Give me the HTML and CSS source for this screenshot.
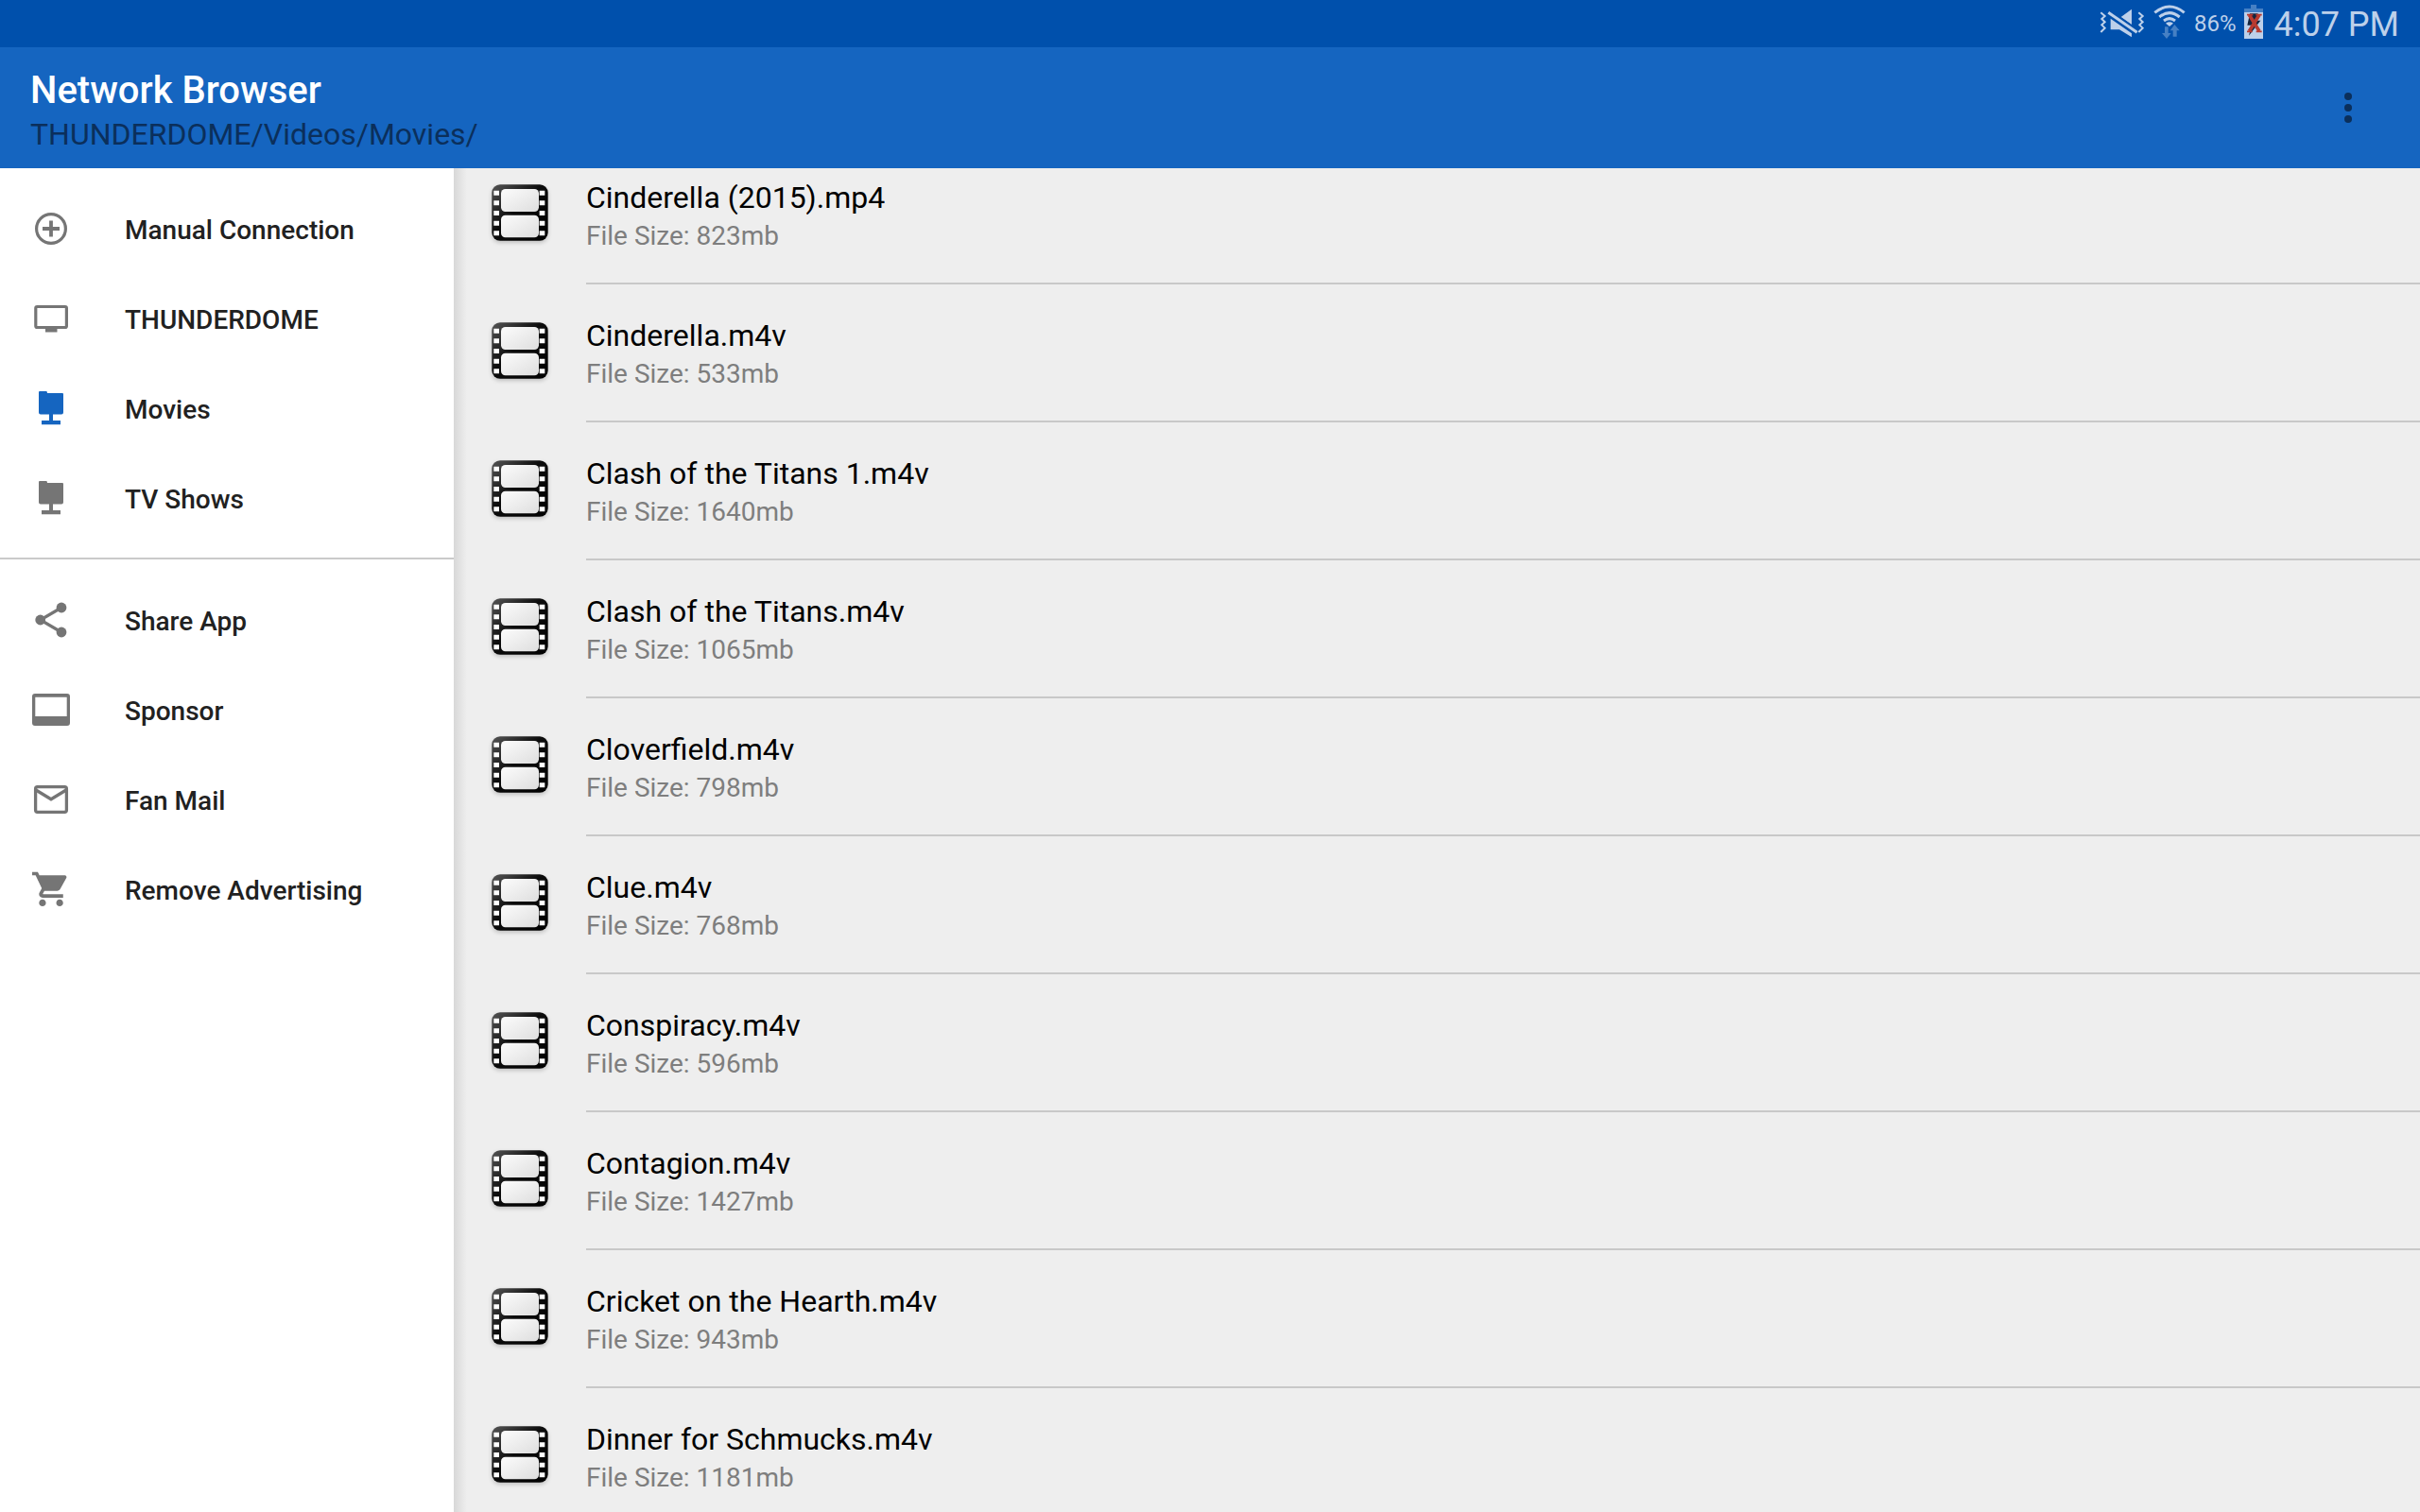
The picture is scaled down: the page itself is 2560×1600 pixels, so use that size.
FILE: index.html
```html
<!DOCTYPE html>
<html lang="en">
<head>
    <meta charset="UTF-8">
    <meta name="viewport" content="width=device-width, initial-scale=1.0">
    <title>Network Browser</title>
    <link rel="stylesheet" href="styles.css">
</head>
<body>
    <!-- film icon shared by every file row -->
    <svg class="sprite" aria-hidden="true">
        <defs>
            <linearGradient id="frame" x1="0" y1="0" x2="1" y2="1">
                <stop offset="0" stop-color="#555"/>
                <stop offset="0.45" stop-color="#0c0c0c"/>
                <stop offset="1" stop-color="#000"/>
            </linearGradient>
            <linearGradient id="glass" x1="0" y1="0" x2="1" y2="1">
                <stop offset="0" stop-color="#fcfcfc"/>
                <stop offset="1" stop-color="#dedede"/>
            </linearGradient>
            <symbol id="film" viewBox="0 0 180 180">
                <rect x="1" y="1" width="178" height="178" rx="26" fill="url(#frame)"/>
                <rect x="30" y="15" width="120" height="72" rx="14" fill="url(#glass)"/>
                <rect x="30" y="98" width="120" height="71" rx="14" fill="url(#glass)"/>
                <path fill="#fff" d="M7 20h17v15H7zM7 52h17v15H7zM7 84h17v15H7zM7 116h17v15H7zM7 148h17v15H7zM152 20h17v15h-17zM152 52h17v15h-17zM152 84h17v15h-17zM152 116h17v15h-17zM152 148h17v15h-17z"/>
            </symbol>
        </defs>
    </svg>

    <div class="status-bar">
        <svg class="status-icon" width="48" height="36" viewBox="0 -5 144 108">
            <path fill="none" stroke="#bdd0ea" stroke-width="6" d="M4 20l13 11-10 9 10 10-10 9 10 10-13 13M124 20l13 11-10 9 10 10-10 9 10 10-13 13"/>
            <path fill="#bdd0ea" d="M102 9v49L68 34zM35 39v35h28l39 24V86z"/>
            <path stroke="#0050ac" stroke-width="18" d="M30 18l88 64"/>
            <path stroke="#bdd0ea" stroke-width="9" d="M28 20l91 63"/>
        </svg>
        <svg class="status-icon" width="36" height="36" viewBox="0 0 108 108">
            <path fill="none" stroke="#bdd0ea" stroke-width="9" d="M7 25Q54-13 101 25M22 39Q54 13 86 39M36 51Q54 37 72 51"/>
            <path fill="#bdd0ea" d="M42 59q12-8 24 0L54 69z"/>
            <path fill="#4680c4" d="M39 70h11v20h9l-14 18-15-18h9zM70 63l16 19h-9v19H65V82h-9z"/>
        </svg>
        <span class="battery-level">86%</span>
        <svg class="status-icon" width="20" height="36" viewBox="0 0 60 108">
            <path fill="#4680c4" d="M21 0h18v12h21v12H0V12h21z"/>
            <path fill="#bdd0ea" d="M0 24h60v84H0z"/>
            <path fill="#14253f" d="M18 28h26L38 50h14L15 98l8-33H10z"/>
            <path stroke="#b93a30" stroke-width="11" d="M16 32l32 52M48 32L16 84"/>
            <path stroke="#b93a30" stroke-width="5" d="M9 32h19M37 32h19M9 85h17M38 85h18"/>
        </svg>
        <span class="clock">4:07 PM</span>
    </div>

    <header class="app-bar">
        <div class="app-heading">
            <h1 class="app-title">Network Browser</h1>
            <p class="app-path">THUNDERDOME/Videos/Movies/</p>
        </div>
        <button class="menu-button" aria-label="More options">
            <svg width="8" height="32" viewBox="0 0 8 32" fill="currentColor">
                <circle cx="4" cy="4" r="4"/><circle cx="4" cy="16" r="4"/><circle cx="4" cy="28" r="4"/>
            </svg>
        </button>
    </header>

    <div class="content">
        <nav class="sidebar">
            <div class="nav-group">
                <a class="nav-item" href="#">
                    <svg class="nav-icon" viewBox="0 0 44 45">
                        <circle cx="22" cy="23" r="15.4" fill="none" stroke="currentColor" stroke-width="3.2"/>
                        <path fill="none" stroke="currentColor" stroke-width="3.8" d="M13 23h18M22 14.500v17"/>
                    </svg>
                    <span class="nav-label">Manual Connection</span>
                </a>
                <a class="nav-item" href="#">
                    <svg class="nav-icon" viewBox="0 0 44 45">
                        <rect x="5.800" y="10.500" width="32.600" height="22" rx="1.500" fill="none" stroke="currentColor" stroke-width="3.200"/>
                        <path fill="currentColor" d="M16 33h12.500v4.500H16z"/>
                    </svg>
                    <span class="nav-label">THUNDERDOME</span>
                </a>
                <a class="nav-item active" href="#">
                    <svg class="nav-icon" viewBox="0 0 44 45">
                        <path fill="currentColor" d="M9 6q0-1 1-1h7q1 0 1 2h16q1 0 1 1v19.500q0 2-2 2h-9V36h8v4.300H12V36h8v-6.500h-9q-2 0-2-2z"/>
                    </svg>
                    <span class="nav-label">Movies</span>
                </a>
                <a class="nav-item" href="#">
                    <svg class="nav-icon" viewBox="0 0 44 45">
                        <path fill="currentColor" d="M9 6q0-1 1-1h7q1 0 1 2h16q1 0 1 1v19.500q0 2-2 2h-9V36h8v4.300H12V36h8v-6.500h-9q-2 0-2-2z"/>
                    </svg>
                    <span class="nav-label">TV Shows</span>
                </a>
            </div>
            <div class="nav-group">
                <a class="nav-item" href="#">
                    <svg class="nav-icon" viewBox="0 0 44 45" fill="currentColor">
                        <circle cx="33" cy="10" r="5.400"/><circle cx="10.700" cy="23" r="5.400"/><circle cx="33" cy="36" r="5.400"/>
                        <path fill="none" stroke="currentColor" stroke-width="3.200" d="M33 10L10.700 23 33 36"/>
                    </svg>
                    <span class="nav-label">Share App</span>
                </a>
                <a class="nav-item" href="#">
                    <svg class="nav-icon" viewBox="0 0 44 45">
                        <path fill="currentColor" fill-rule="evenodd" d="M5 6h34q3 0 3 3v28q0 3-3 3H5q-3 0-3-3V9q0-3 3-3zM5.300 9.700V30h33.400V9.700z"/>
                    </svg>
                    <span class="nav-label">Sponsor</span>
                </a>
                <a class="nav-item" href="#">
                    <svg class="nav-icon" viewBox="0 0 44 45">
                        <rect x="5.600" y="9.700" width="32.800" height="26.600" rx="2" fill="none" stroke="currentColor" stroke-width="3.300"/>
                        <path fill="none" stroke="currentColor" stroke-width="3.300" d="M6 13l16 9.700L38 13"/>
                    </svg>
                    <span class="nav-label">Fan Mail</span>
                </a>
                <a class="nav-item" href="#">
                    <svg class="nav-icon" viewBox="0 0 44 45">
                        <path fill="currentColor" transform="translate(.2 1) scale(1.82)" d="M7 18c-1.100 0-1.990.9-1.990 2S5.900 22 7 22s2-.9 2-2-.9-2-2-2zM1 2v2h2l3.600 7.590-1.350 2.450c-.16.28-.25.61-.25.96 0 1.100.9 2 2 2h12v-2H7.420c-.14 0-.25-.11-.25-.25l.03-.12.9-1.630h7.450c.75 0 1.410-.41 1.750-1.030l3.580-6.490A1 1 0 0 0 20.010 4H5.210l-.94-2H1zm16 16c-1.100 0-1.990.9-1.990 2s.89 2 1.990 2 2-.9 2-2-.9-2-2-2z"/>
                    </svg>
                    <span class="nav-label">Remove Advertising</span>
                </a>
            </div>
        </nav>

        <main class="files">
            <ul class="file-list">
                <li class="file">
                    <svg class="file-icon"><use href="#film"/></svg>
                    <div class="file-info">
                        <h2 class="file-name">Cinderella (2015).mp4</h2>
                        <p class="file-size">File Size: 823mb</p>
                    </div>
                </li>
                <li class="file">
                    <svg class="file-icon"><use href="#film"/></svg>
                    <div class="file-info">
                        <h2 class="file-name">Cinderella.m4v</h2>
                        <p class="file-size">File Size: 533mb</p>
                    </div>
                </li>
                <li class="file">
                    <svg class="file-icon"><use href="#film"/></svg>
                    <div class="file-info">
                        <h2 class="file-name">Clash of the Titans 1.m4v</h2>
                        <p class="file-size">File Size: 1640mb</p>
                    </div>
                </li>
                <li class="file">
                    <svg class="file-icon"><use href="#film"/></svg>
                    <div class="file-info">
                        <h2 class="file-name">Clash of the Titans.m4v</h2>
                        <p class="file-size">File Size: 1065mb</p>
                    </div>
                </li>
                <li class="file">
                    <svg class="file-icon"><use href="#film"/></svg>
                    <div class="file-info">
                        <h2 class="file-name">Cloverfield.m4v</h2>
                        <p class="file-size">File Size: 798mb</p>
                    </div>
                </li>
                <li class="file">
                    <svg class="file-icon"><use href="#film"/></svg>
                    <div class="file-info">
                        <h2 class="file-name">Clue.m4v</h2>
                        <p class="file-size">File Size: 768mb</p>
                    </div>
                </li>
                <li class="file">
                    <svg class="file-icon"><use href="#film"/></svg>
                    <div class="file-info">
                        <h2 class="file-name">Conspiracy.m4v</h2>
                        <p class="file-size">File Size: 596mb</p>
                    </div>
                </li>
                <li class="file">
                    <svg class="file-icon"><use href="#film"/></svg>
                    <div class="file-info">
                        <h2 class="file-name">Contagion.m4v</h2>
                        <p class="file-size">File Size: 1427mb</p>
                    </div>
                </li>
                <li class="file">
                    <svg class="file-icon"><use href="#film"/></svg>
                    <div class="file-info">
                        <h2 class="file-name">Cricket on the Hearth.m4v</h2>
                        <p class="file-size">File Size: 943mb</p>
                    </div>
                </li>
                <li class="file">
                    <svg class="file-icon"><use href="#film"/></svg>
                    <div class="file-info">
                        <h2 class="file-name">Dinner for Schmucks.m4v</h2>
                        <p class="file-size">File Size: 1181mb</p>
                    </div>
                </li>
            </ul>
        </main>
    </div>
</body>
</html>
```
FILE: styles.css
```css
* {
    box-sizing: border-box;
}

body {
    font-family: Roboto, sans-serif;
    margin: 0;
    height: 100vh;
    display: flex;
    flex-direction: column;
    overflow: hidden;
    background: #eee;
    color: #000;
}

h1, h2, p, ul {
    margin: 0;
    padding: 0;
}

.sprite {
    position: absolute;
    width: 0;
    height: 0;
}

.status-bar {
    flex: none;
    display: flex;
    justify-content: flex-end;
    align-items: center;
    gap: 8px;
    height: 50px;
    padding-right: 22px;
    background: #0050ac;
    color: #bdd0ea;
}

.status-icon {
    flex: none;
    margin-top: -4px;
}

.battery-level {
    font-size: 24px;
}

.clock {
    padding: 2px 0 0 4px;
    font-size: 36px;
}

.app-bar {
    flex: none;
    display: flex;
    justify-content: space-between;
    align-items: center;
    height: 128px;
    padding: 0 32px;
    background: #1565c0;
}

.app-heading {
    padding-top: 12px;
}

.app-title {
    font-size: 40px;
    font-weight: 500;
    line-height: 44px;
    color: #fff;
}

.app-path {
    font-size: 32px;
    line-height: 48px;
    color: #0b2f5b;
}

.menu-button {
    display: flex;
    justify-content: center;
    align-items: center;
    width: 88px;
    height: 88px;
    padding: 0;
    border: none;
    background: none;
    color: #0b2f5b;
    cursor: pointer;
}

.content {
    flex: 1;
    display: flex;
    min-height: 0;
}

.sidebar {
    flex: none;
    width: 480px;
    background: #fff;
}

.nav-group {
    padding: 16px 0;
}

.nav-group + .nav-group {
    border-top: 2px solid #cacaca;
}

.nav-item {
    display: flex;
    align-items: center;
    gap: 56px;
    height: 95px;
    padding-left: 32px;
    font-size: 28px;
    font-weight: 500;
    color: #212121;
    text-decoration: none;
}

.nav-label {
    padding-top: 4px;
}

.nav-icon {
    width: 44px;
    height: 45px;
    color: #757575;
}

.active .nav-icon {
    color: #1565c0;
}

.files {
    flex: 1;
    overflow: hidden;
    background: linear-gradient(to right, #d8d8d8, #eee 14px);
}

/* list is scrolled a little under the app bar */
.file-list {
    margin-top: -23px;
    list-style: none;
}

.file {
    display: flex;
    gap: 40px;
    padding-left: 40px;
}

.file-icon {
    flex: none;
    width: 60px;
    height: 60px;
    margin-top: 40px;
    filter: drop-shadow(0 2px 2px rgba(0,0,0,0.2));
}

.file-info {
    flex: 1;
    padding: 34px 0 28px;
    border-bottom: 2px solid #c8c8c8;
}

.file-name {
    font-size: 32px;
    font-weight: 400;
    line-height: 40px;
}

.file-size {
    font-size: 28px;
    line-height: 42px;
    color: #7e7e7e;
}
```
